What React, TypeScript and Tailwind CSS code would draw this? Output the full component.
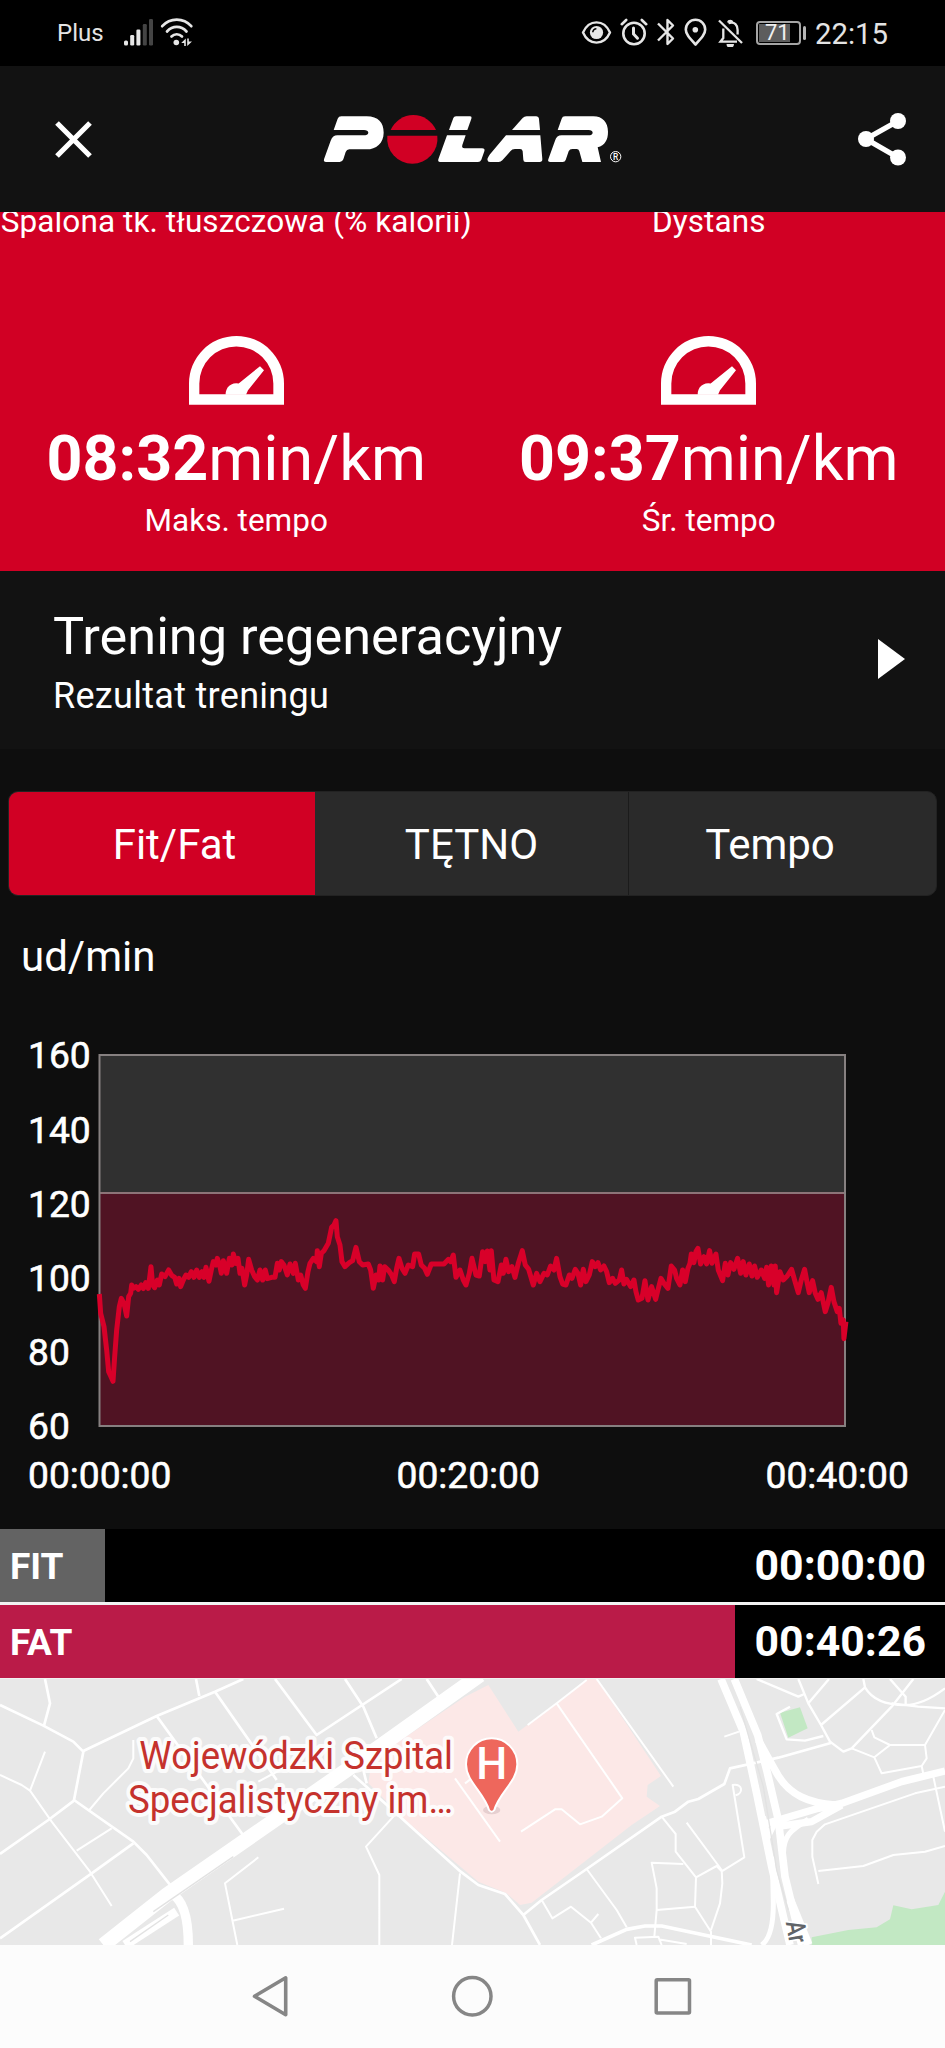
import React from 'react';

interface PaceStatProps {
  topLabel: string;
  value: string;
  unit: string;
  label: string;
}

const HEART_RATE_LINE =
  '58,312 62,370 72,410 80,480 86,545 93,560 99,574 104,500 110,420 118,350 124,325 132,340 140,378 146,320 152,310 155,285 160,295 168,290 175,298 184,285 190,296 197,278 205,295 213,230 218,285 224,293 232,270 238,285 245,252 255,260 266,240 275,256 284,262 290,282 297,265 302,290 310,270 318,255 326,262 334,245 342,262 350,240 358,262 366,245 372,262 378,232 387,274 394,240 400,215 408,225 412,205 420,230 424,250 430,212 440,250 448,205 456,225 460,192 468,220 474,205 480,250 486,235 494,285 500,255 506,208 515,240 524,260 532,270 540,240 548,270 556,240 562,266 575,262 585,262 592,220 598,240 604,215 612,225 622,255 630,222 640,250 646,220 655,270 662,255 670,285 676,295 684,245 690,220 700,205 710,215 712,182 718,230 724,190 732,182 745,160 755,112 762,105 768,92 772,140 780,165 786,215 795,230 808,218 818,212 828,172 838,215 848,225 865,222 872,240 880,295 888,255 896,270 900,228 908,270 914,230 925,240 935,255 943,275 950,235 957,205 966,235 975,250 985,225 998,230 1004,192 1016,192 1024,225 1034,235 1042,253 1054,222 1075,222 1092,222 1105,208 1112,215 1120,195 1128,262 1140,240 1150,270 1158,285 1168,250 1176,205 ' +
  '1188,255 1198,258 1208,185 1216,215 1222,183 1230,240 1234,182 1242,270 1254,275 1264,225 1270,250 1278,208 1286,245 1296,230 1305,262 1315,220 1327,182 1336,225 1346,238 1360,285 1370,250 1380,275 1392,250 1402,255 1412,228 1422,240 1430,205 1440,260 1448,282 1458,285 1468,255 1476,265 1486,238 1494,250 1502,285 1510,238 1518,275 1528,255 1537,215 1546,230 1554,218 1562,240 1572,228 1580,245 1588,278 1598,265 1606,280 1618,270 1625,240 1632,282 1640,268 1652,290 1662,270 1668,305 1675,330 1686,325 1695,272 1704,330 1715,290 1727,328 1734,300 1743,265 1752,280 1764,295 1774,228 1784,240 1790,265 1800,285 1808,240 1816,275 1824,235 1830,220 1834,192 1842,218 1848,185 1854,175 1862,222 1872,200 1880,222 1889,182 1896,220 1908,192 1915,240 1928,272 1936,220 1944,255 1952,218 1962,238 1973,205 1982,250 1990,215 1998,255 2008,222 2016,258 2024,228 2032,262 2044,240 2054,265 2060,232 2066,285 2074,228 2082,285 2086,228 2090,308 2100,245 2110,270 2122,258 2135,238 2144,270 2155,308 2164,270 2174,238 2182,280 2188,308 2198,272 2206,310 2214,328 2224,308 2236,365 2244,340 2254,292 2262,335 2272,365 2278,355 2283,400 2290,390 2292,446 2298,395';

const yTicks = [
  { label: '160', y: 87 },
  { label: '140', y: 161.5 },
  { label: '120', y: 235.5 },
  { label: '100', y: 310 },
  { label: '80', y: 384 },
  { label: '60', y: 457.5 },
];

const xTicks = [
  { label: '00:00:00', x: 28 },
  { label: '00:20:00', x: 396.5 },
  { label: '00:40:00', x: 765.5 },
];

const StatusBar: React.FC = () => (
  <div className="flex h-[66px] shrink-0 bg-black pl-[57px] text-[#e4e4e4]">
    <span className="mt-[17px] w-[67px] text-[24px] leading-[33px]">Plus</span>
    <svg className="mt-[19px]" width="30" height="27" viewBox="0 0 30 27" fill="#e6e6e6">
      <rect x="0" y="21.5" width="4" height="5" rx="1.5" />
      <rect x="6.2" y="16" width="4" height="10.5" rx="1.2" />
      <rect x="12.4" y="10.5" width="4" height="16" rx="1.2" />
      <rect x="18.8" y="5" width="4" height="21.5" rx="1.2" fill="#444" />
      <rect x="25" y="0" width="4" height="26.5" rx="1.2" fill="#444" />
    </svg>
    <svg className="ml-[6px] mt-[18px]" width="34" height="29" viewBox="0 0 34 29" fill="none" stroke="#e6e6e6" strokeWidth="2.7" strokeLinecap="round">
      <path d="M2.2 8.2C10-.6 23.5-.6 31.3 8.2" />
      <path d="M7 13.5C12.5 7.4 21 7.4 26.5 13.5" />
      <path d="M11.5 18.5C14.5 15.5 19 15.5 22 18.5" />
      <circle cx="16.3" cy="24.5" r="2.8" fill="#e6e6e6" stroke="none" />
      <path d="M25.8 20.5v7.5h-1.6v-3h-3l4.6-4.5zM27.2 28v-7.5h1.6v3h3.2L27.2 28z" fill="#e6e6e6" stroke="none" />
    </svg>
    <svg className="ml-[387px] mt-[20px]" width="31" height="25" viewBox="0 0 31 25" fill="none" stroke="#e6e6e6" strokeWidth="2.4">
      <path d="M2 12.5C8 -1 23 -1 29 12.5C23 26 8 26 2 12.5z" strokeLinejoin="round" />
      <circle cx="15.5" cy="12.5" r="6.6" fill="#e6e6e6" stroke="none" />
      <path d="M11.8 12.3a3.6 3.6 0 0 1 3.6-3.6" stroke="#000" strokeWidth="1.6" />
    </svg>
    <svg className="ml-[8px] mt-[18px]" width="28" height="28" viewBox="0 0 28 28" fill="none" stroke="#e6e6e6" strokeWidth="2.6" strokeLinecap="round">
      <circle cx="14" cy="15.5" r="10.7" />
      <path d="M13.5 10v6l4 4.2" strokeWidth="3" />
      <path d="M1.8 6.2 6.2 2M26.2 6.2 21.8 2" />
    </svg>
    <svg className="ml-[9px] mt-[18px]" width="18" height="28" viewBox="0 0 18 28" fill="none" stroke="#e6e6e6" strokeWidth="2.4" strokeLinejoin="round">
      <path d="M1 5.5 16 20.5 10.5 26V2L16 7.5 1 22.5" />
    </svg>
    <svg className="ml-[9px] mt-[18px]" width="23" height="29" viewBox="0 0 23 29" fill="none" stroke="#e6e6e6" strokeWidth="2.6">
      <path d="M11.5 26.5C5 19.5 1.8 16 1.8 11.5a9.7 9.7 0 0 1 19.4 0c0 4.5-3.2 8-9.7 15z" strokeLinejoin="round" />
      <circle cx="11.3" cy="11.7" r="2.8" fill="#e6e6e6" stroke="none" />
    </svg>
    <svg className="ml-[10px] mt-[18px]" width="27" height="29" viewBox="0 0 27 29" fill="none" stroke="#e6e6e6" strokeWidth="2.3">
      <path d="M2 2.5 25 25" />
      <path d="M11.5 5.2C18 3 20.6 7.500 20.6 12v4.5M6.3 10.5V20L3.5 23.6H20" />
      <path d="M11 4.5a2.3 2.3 0 0 1 4.4 0" />
      <path d="M9.5 26h7.5a3.6 3.6 0 0 1-7.5 0z" fill="#e6e6e6" stroke="none" />
    </svg>
    <div className="ml-[12px] mt-[21px] h-6 w-[45px] rounded-[4px] border-2 border-[#a5a5a5] p-[1px]">
      <div className="h-full w-[31px] bg-[#5d5d5d]">
        <span className="block pl-[6px] text-[22px] leading-[17px] text-[#f0f0f0]">71</span>
      </div>
    </div>
    <div className="ml-[2px] mt-[26px] h-[14px] w-[3px] rounded-sm bg-[#b5b5b5]" />
    <span className="ml-[9px] mt-[14px] text-[29.3px] leading-[40px]">22:15</span>
  </div>
);

const PolarLogo: React.FC = () => (
  <svg width="340" height="90" viewBox="0 0 1020 270" fill="#fff">
    <path d="M101 120L113 86Q116 79 124 79H200C235 79 251 98 251 128C251 160 228 178 200 178H148Q140 178 137 186L130 208Q127 216 119 216H78Q70 216 72 208L92 152Q98 136 112 136H190Q204 136 205 128Q204 120 192 120Z" />
    <path d="M272 120A74 74 0 0 1 408 120Z" fill="#d10024" />
    <path d="M412 137A75.5 75.5 0 1 1 262 137Z" fill="#d10024" />
    <path d="M447 120L460 84Q462 79 468 79H510Q516 79 514 86L502 120Z" />
    <path d="M441 136H497L487 165Q484 175 494 175H546Q556 175 553 184L544 209Q541 216 534 216H420Q413 216 415 208Z" />
    <path d="M636 120L668 84Q673 79 680 79H708Q716 79 717 87L720 120Z" />
    <path d="M618 136H721L727 208Q727 216 719 216H677Q670 216 670 209L668 184Q667 177 660 177H645Q636 177 631 184L607 211Q602 216 596 216H570Q560 216 563 205Q565 200 570 193Z" />
    <path d="M773 120L785 86Q787 79 795 79H880C908 79 924 97 924 125C924 150 915 165 893 172L903 216H847L838 184Q836 177 830 177H817Q809 177 806 184L797 210Q795 216 788 216H751Q742 216 745 208L765 152Q770 136 785 136H865Q877 136 878 128Q877 120 866 120Z" />
    <circle cx="947" cy="200" r="15.5" fill="none" stroke="#fff" strokeWidth="3" />
    <text x="947" y="209" fontSize="25" fontWeight="500" textAnchor="middle">R</text>
  </svg>
);

const Header: React.FC = () => (
  <header className="flex h-[146px] shrink-0 bg-[#121212] pl-[55px]">
    <button className="mt-[55px] h-[37px] w-[37px]" aria-label="Zamknij">
      <svg width="37" height="37" viewBox="0 0 37 37" stroke="#fff" strokeWidth="5.2">
        <path d="M2 2 35 35M35 2 2 35" />
      </svg>
    </button>
    <div className="ml-[208px] mt-6">
      <PolarLogo />
    </div>
    <button className="ml-[217px] mt-[46px] h-[54px] w-[50px]" aria-label="Udostępnij">
      <svg width="50" height="54" viewBox="0 0 50 54" fill="#fff">
        <path d="M41 9 9 27 41 45.5" fill="none" stroke="#fff" strokeWidth="5.4" />
        <circle cx="41" cy="9" r="8" />
        <circle cx="9" cy="27" r="8" />
        <circle cx="41" cy="45.5" r="8" />
      </svg>
    </button>
  </header>
);

const PaceStat: React.FC<PaceStatProps> = ({ topLabel, value, unit, label }) => (
  <div className="flex flex-col items-center whitespace-nowrap">
    <p className="-mt-[10px] text-[31.5px] leading-[40px] tracking-[0.1px]">{topLabel}</p>
    <svg className="mt-[94px]" width="95" height="69" viewBox="567 48 285 206" fill="#fff">
      <path fillRule="evenodd" d="M567 254V190A142.5 142.5 0 0 1 852 190V254ZM598 222V190A111 111 0 0 1 820 190V222Z" />
      <path d="M677 224A32 32 0 0 1 716 190L780 138L792 150L744 210L738 224Z" />
    </svg>
    <p className="mt-[17px] text-[62.8px] leading-[74px]">
      <span className="font-bold">{value}</span>
      {unit}
    </p>
    <p className="mt-[5px] text-[31.5px] leading-[40px]">{label}</p>
  </div>
);

const HeartRateChart: React.FC = () => (
  <svg className="block shrink-0" width="945" height="548" viewBox="0 0 945 548">
    <rect x="99.5" y="74" width="746" height="138" fill="#303030" />
    <rect x="99.5" y="212" width="746" height="233" fill="#501323" />
    <path d="M99.5 212H845" stroke="#8d7478" strokeWidth="2" />
    <rect x="99.5" y="74" width="745.5" height="371" fill="none" stroke="#868080" strokeWidth="2" />
    <g transform="translate(80 209) scale(0.3333)">
      <polyline points={HEART_RATE_LINE} fill="none" stroke="#d80029" strokeWidth="15" strokeLinejoin="round" />
    </g>
    <g fill="#fff" fontSize="37.2" stroke="#fff" strokeWidth="0.6">
      {yTicks.map((tick) => (
        <text key={tick.label} x="28" y={tick.y}>{tick.label}</text>
      ))}
      {xTicks.map((tick) => (
        <text key={tick.label} x={tick.x} y="506.5">{tick.label}</text>
      ))}
    </g>
  </svg>
);

const RouteMap: React.FC = () => (
  <svg className="block shrink-0 bg-[#e8e8e8]" width="945" height="266" viewBox="0 27 2835 798">
    <g transform="translate(1395 0)">
      <path d="M70 45L160 185L275 100L365 27H395L588 318L548 345L545 380L585 408L500 465L200 698L165 705L125 670L40 635L-180 450L-290 340L-280 270L0 80Z" fill="#fce8e7" />
      <path d="M945 128L1005 112L1028 175L970 203Z" fill="#c2e8c3" />
      <path d="M1040 802L1150 780L1235 772L1275 748L1285 706L1340 718L1420 705L1440 665V825H1040Z" fill="#c2e8c3" />
    </g>

    {/* streets west of the hospital */}
    <g fill="none" stroke="#fff" strokeWidth="8" strokeLinejoin="round">
      <path d="M0 105L130 167L220 215L250 245L222 390L400 515L440 555L530 670" />
      <path d="M135 27L150 100L132 167M250 243L470 138L645 65L730 27M588 27L598 78" />
      <path d="M470 138L740 510M645 65L830 330M825 27L950 195L1205 27M1035 27L1090 110L1130 205M1280 27L1318 85" />
      <path d="M0 552L145 450L222 392M0 805L275 610L400 520" />
      <path d="M0 315L65 345L90 362L155 455L270 605L335 708M90 362L135 245M230 542L335 475" strokeWidth="6" />
      <path d="M400 210V265L385 295L310 370L268 420M775 335L840 300" strokeWidth="6" />
      <path d="M775 562L675 640L712 825M698 752L852 716M1180 440L1098 530L1138 615V825M1380 610L1356 825" strokeWidth="6" />
      <path d="M1060 315L1200 440L1382 605L1435 645L1515 672L1570 735L1620 825M1100 340L1090 300" />
    </g>
    <path d="M1440 15L1040 300L500 675L310 825" fill="none" stroke="#fff" strokeWidth="44" />
    <path d="M515 672C550 690 565 740 565 825M375 825L530 725" fill="none" stroke="#fff" strokeWidth="28" />
    <path d="M460 725L700 560M390 815L505 735" fill="none" stroke="#e2e2e2" strokeWidth="4" />

    <g transform="translate(1395 0)" fill="none" stroke="#fff" strokeLinejoin="round">
      <g strokeWidth="6">
        <path d="M365 30L275 100L188 165M275 100L472 385L410 440L345 463L290 418L270 418L168 485M395 27L625 350" />
        <path d="M-30 325L105 515M0 340L20 325" />
        <path d="M175 735L230 690L365 597L590 440L630 425L670 395L700 387L778 342L795 295L940 263L1100 218" strokeWidth="8" />
        <path d="M590 440L632 492V545L693 622L690 710L738 785V825M665 458L770 600L772 640L765 700L738 780M693 622L755 588L770 604L838 562L803 345C835 340 835 370 812 376" />
        <path d="M655 582L560 578L575 655V720L568 800M575 720L690 710M365 597L455 720L485 772M230 690L262 745L318 710L378 758L408 805M378 758L400 732" />
        <path d="M380 825L485 778L540 768H590L860 825" strokeWidth="11" />
        <path d="M515 825L510 803L580 800L590 825M580 808L665 822" />
        <path d="M778 200L822 185" />
        <path d="M975 110L935 132L965 208L1020 212L1075 198M875 27L1000 80L1018 72M1000 27L1030 100L1068 165L1095 215L1135 245L1160 235L1280 110L1345 27M1030 100L1092 27M1068 165L1200 52L1195 27M1200 52C1225 95 1270 105 1320 105C1370 105 1420 70 1440 55M1275 27L1322 80V105M1280 100L1360 110L1440 115" strokeWidth="7" />
        <path d="M1220 180L1228 202L1275 225L1228 262L1160 235M1275 225H1380L1440 120M1228 262L1250 310L1370 288L1385 265L1380 225M1370 288L1375 312M1405 320L1440 485" />
        <path d="M1060 642L1042 560V510L1055 485L1080 463L1350 370L1440 350M1060 603L1195 588L1285 555L1380 545L1440 528" />
      </g>
      <path d="M768 27L835 185L875 370L920 590L975 825" strokeWidth="23" />
      <path d="M808 27L878 195L905 300L940 450L960 620L1010 825" strokeWidth="23" />
      <path d="M880 210L930 300C970 380 1040 400 1110 405" strokeWidth="22" />
      <path d="M900 462L1060 415L1130 400L1310 335L1440 303M935 470L1040 455L1130 405" strokeWidth="22" />
      <path d="M955 550C955 500 975 480 1030 448M895 440L910 500L930 460" strokeWidth="16" />
      <path d="M922 560L925 700Q925 800 890 825" strokeWidth="15" />
      <path d="M975 690L1030 825" strokeWidth="26" />
      <path d="M825 110L895 350L935 600L970 720" stroke="#e2e2e2" strokeWidth="4" />
    </g>

    <g transform="translate(1395 0)">
      <text transform="translate(962 757) rotate(80) scale(0.82 1)" fontSize="80" fill="#606468" stroke="#fff" strokeWidth="12" paintOrder="stroke" fontWeight="500">Ar</text>
      <ellipse cx="80" cy="420" rx="26" ry="13" fill="#e6cfd0" />
      <path d="M80 205C122 205 157 239 157 283C157 335 102 368 88 420Q80 430 72 420C58 368 3 335 3 283C3 239 38 205 80 205Z" fill="#ee675c" stroke="#fff" strokeWidth="6" />
      <text x="80" y="328" fontSize="131" fontWeight="500" fill="#fff" textAnchor="middle">H</text>
    </g>

    <g fontSize="114" fill="#c5322d" stroke="#fff" strokeOpacity="0.85" strokeWidth="24" strokeLinejoin="round" paintOrder="stroke">
      <text x="418" y="297" textLength="941" lengthAdjust="spacingAndGlyphs">Wojewódzki Szpital</text>
      <text x="384" y="430" textLength="975" lengthAdjust="spacingAndGlyphs">Specjalistyczny im…</text>
    </g>
  </svg>
);

const App: React.FC = () => {
  return (
    <div className="flex h-[2048px] w-[945px] flex-col overflow-hidden bg-[#0e0e0e] font-[Roboto,sans-serif] text-white">
      <StatusBar />
      <Header />

      <section className="grid h-[359px] shrink-0 grid-cols-2 overflow-hidden bg-[#d10024]">
        <PaceStat topLabel="Spalona tk. tłuszczowa (% kalorii)" value="08:32" unit="min/km" label="Maks. tempo" />
        <PaceStat topLabel="Dystans" value="09:37" unit="min/km" label="Śr. tempo" />
      </section>

      <section className="flex h-[178px] shrink-0 justify-between bg-[#121212] pl-[53px] pr-10 pt-[35px]">
        <div>
          <h2 className="text-[52.3px] leading-[60px]">Trening regeneracyjny</h2>
          <p className="mt-2 text-[36px] leading-[44px] tracking-[0.3px]">Rezultat treningu</p>
        </div>
        <svg className="mt-[33px]" width="27" height="40" viewBox="0 0 27 40" fill="#fff">
          <path d="M0 0 27 20 0 40z" />
        </svg>
      </section>

      <div className="mx-[8px] mt-[42px] flex h-[105px] shrink-0 overflow-hidden rounded-[10px] border border-[#222] bg-[#2a2a2a] text-[42px] leading-[105px]">
        <button className="w-[306px] bg-[#d10024] pl-[25px] text-center">Fit/Fat</button>
        <button className="w-[314px] border-r border-[#1b1b1b] text-center">TĘTNO</button>
        <button className="flex-1 pr-[25px] text-center">Tempo</button>
      </div>

      <p className="ml-[21px] mt-[36px] text-[42px] leading-[49px]">ud/min</p>
      <HeartRateChart />

      <div className="flex h-[73px] shrink-0 items-center bg-black font-bold">
        <div className="h-full w-[105px] bg-[#636363] pl-[10px] text-[37px] leading-[76px]">FIT</div>
        <span className="ml-auto pr-[19px] text-[42.8px] leading-[73px]">00:00:00</span>
      </div>
      <div className="h-[3px] shrink-0 bg-[#f2f2f2]" />
      <div className="flex h-[73px] shrink-0 items-center bg-black font-bold">
        <div className="h-full w-[735px] bg-[#ba1b48] pl-[10px] text-[37px] leading-[76px]">FAT</div>
        <span className="ml-auto pr-[19px] text-[42.8px] leading-[73px]">00:40:26</span>
      </div>
      <div className="h-px shrink-0 bg-[#f2f2f2]" />

      <RouteMap />

      <nav className="flex h-[103px] shrink-0 bg-[#fcfcfc] pl-[252px] pt-[30px]">
        <svg width="37" height="43" viewBox="0 0 37 43" fill="none" stroke="#868686" strokeWidth="3.6" strokeLinejoin="round">
          <path d="M2.5 21.3 33.7 2.8V39.8z" />
        </svg>
        <svg className="ml-[162px]" width="43" height="43" viewBox="0 0 43 43" fill="none" stroke="#868686" strokeWidth="3.5">
          <circle cx="21.3" cy="21.3" r="18.7" />
        </svg>
        <svg className="ml-[158px]" width="43" height="43" viewBox="0 0 43 43" fill="none" stroke="#868686" strokeWidth="3.5">
          <rect x="4.2" y="4.7" width="33.3" height="33.3" rx="1" />
        </svg>
      </nav>
    </div>
  );
};

export default App;
